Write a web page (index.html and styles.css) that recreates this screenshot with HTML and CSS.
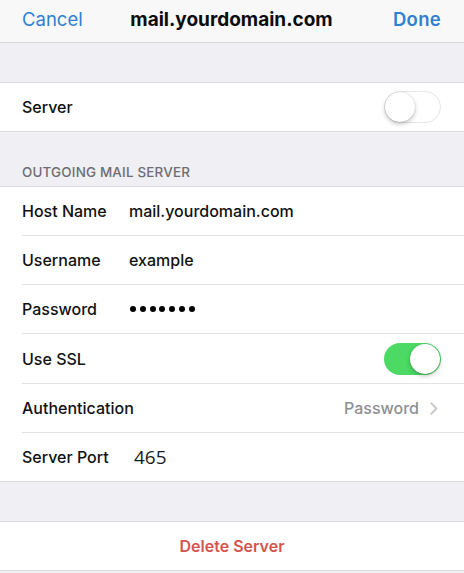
FILE: index.html
```html
<!DOCTYPE html>
<html>
<head>
<meta charset="utf-8">
<link rel="stylesheet" href="styles.css">
</head>
<body>
<div class="screen">
  <header class="nav">
    <span class="nav-btn cancel">Cancel</span>
    <span class="nav-title">mail.yourdomain.com</span>
    <span class="nav-btn done">Done</span>
  </header>

  <div class="spacer top"></div>

  <div class="group">
    <div class="row">
      <div class="cell">
        <span class="label">Server</span>
        <span class="toggle off"><span class="knob"></span></span>
      </div>
    </div>
  </div>

  <div class="section-header">OUTGOING MAIL SERVER</div>

  <div class="group">
    <div class="row">
      <div class="cell"><span class="label">Host Name</span><span class="value">mail.yourdomain.com</span></div>
    </div>
    <div class="row">
      <div class="cell"><span class="label">Username</span><span class="value">example</span></div>
    </div>
    <div class="row">
      <div class="cell"><span class="label">Password</span><span class="dots"><i></i><i></i><i></i><i></i><i></i><i></i><i></i></span></div>
    </div>
    <div class="row">
      <div class="cell tall">
        <span class="label">Use SSL</span>
        <span class="toggle on"><span class="knob"></span></span>
      </div>
    </div>
    <div class="row">
      <div class="cell">
        <span class="label">Authentication</span>
        <span class="detail">Password</span>
        <svg class="chevron" width="8" height="13" viewBox="0 0 8 13"><path d="M1.2 1.2 L6.4 6.5 L1.2 11.8" fill="none" stroke="#c7c7cc" stroke-width="1.8" stroke-linecap="round" stroke-linejoin="round"/></svg>
      </div>
    </div>
    <div class="row">
      <div class="cell"><span class="label">Server Port</span><span class="value port">465</span></div>
    </div>
  </div>

  <div class="spacer mid"></div>

  <div class="group">
    <div class="row action">
      <div class="cell"><span class="delete">Delete Server</span></div>
    </div>
  </div>
</div>
</body>
</html>
```

FILE: styles.css
```css
html, body {
  margin: 0;
  padding: 0;
  background: #efeff4;
}

.screen {
  width: 464px;
  height: 573px;
  overflow: hidden;
  background: #efeff4;
  font-family: "Inter", "Liberation Sans", sans-serif;
  color: #111;
}

.nav {
  height: 42px;
  box-sizing: border-box;
  background: #f8f8f8;
  border-bottom: 1px solid #d6d6d8;
  display: grid;
  grid-template-columns: 1fr auto 1fr;
  align-items: center;
  padding: 0 23px 4px 22px;
  height: 43px;
}

.nav-btn {
  font-size: 18.5px;
  color: #2f80d0;
}

.cancel {
  font-weight: 400;
  justify-self: start;
}

.done {
  font-weight: 600;
  letter-spacing: 0.3px;
  justify-self: end;
}

.nav-title {
  font-size: 19px;
  font-weight: 700;
  color: #0c0c0c;
}

.spacer.top {
  height: 39px;
}

.spacer.mid {
  height: 39px;
}

.group {
  background: #fff;
  border-top: 1px solid #dcdce0;
  border-bottom: 1px solid #dcdce0;
}

.row {
  padding-left: 22px;
}

.cell {
  height: 48px;
  display: flex;
  align-items: center;
  border-bottom: 1px solid #e3e3e6;
  padding-right: 23px;
}

.cell.tall {
  height: 49px;
}

.row:last-child .cell {
  border-bottom: none;
}

.label {
  width: 107px;
  flex: none;
  font-size: 16px;
  font-weight: 500;
  color: #111;
}

.value {
  font-size: 16px;
  font-weight: 500;
  color: #111;
}

.value.port {
  font-family: "Open Sans", "DejaVu Sans", sans-serif;
  font-weight: 400;
  font-size: 19px;
  padding-left: 5px;
  color: #1a1a1a;
}

.dots {
  display: flex;
  gap: 3.8px;
  padding-left: 1px;
}

.dots i {
  width: 6px;
  height: 6px;
  border-radius: 50%;
  background: #000;
}

.toggle {
  margin-left: auto;
  width: 57px;
  height: 32px;
  border-radius: 16px;
  box-sizing: border-box;
  position: relative;
  flex: none;
}

.toggle.off {
  background: #fff;
  border: 1.5px solid #e6e6e8;
}

.toggle.on {
  background: #4cd964;
}

.knob {
  position: absolute;
  top: 1px;
  width: 30px;
  height: 30px;
  border-radius: 50%;
  background: #fff;
  box-shadow: 0 2px 4px rgba(0, 0, 0, 0.25), 0 0 1px rgba(0, 0, 0, 0.2);
}

.toggle.off .knob {
  top: -0.5px;
  left: -0.5px;
}

.toggle.on .knob {
  right: 1px;
}

.detail {
  margin-left: auto;
  font-size: 16px;
  font-weight: 500;
  color: #8e8e93;
}

.chevron {
  margin-left: 11px;
  margin-right: 3px;
}

.row.action {
  padding-left: 0;
}

.row.action .cell {
  justify-content: center;
  padding-right: 0;
}

.delete {
  font-size: 16px;
  font-weight: 600;
  color: #d5534f;
}

.section-header {
  height: 54px;
  box-sizing: border-box;
  padding: 0 22px 6px;
  display: flex;
  align-items: flex-end;
  font-size: 13.4px;
  font-weight: 500;
  color: #6d6d72;
  letter-spacing: 0.2px;
}
```
